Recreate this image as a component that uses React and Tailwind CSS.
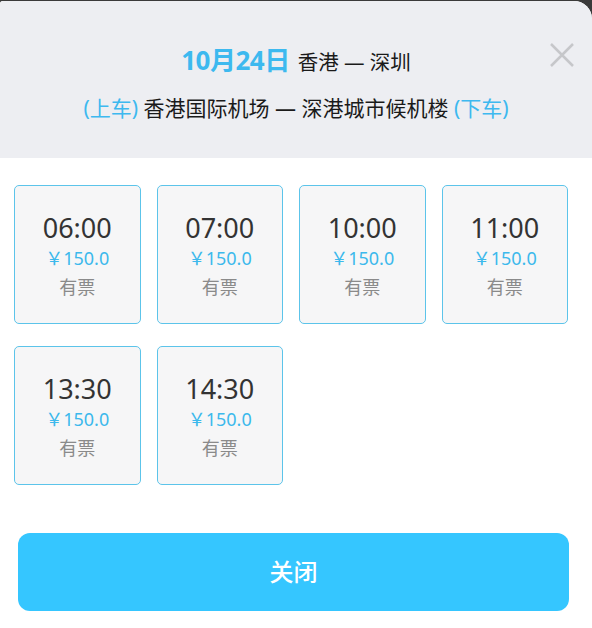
const times = ["06:00", "07:00", "10:00", "11:00", "13:30", "14:30"];

function TimeCard({ time }) {
  return (
    <div className="w-[126.5px] h-[139px] rounded-[5px] border border-[#5cc4ea] bg-[#f6f6f7] flex flex-col items-center pt-[24px]">
      <div className="text-[27px] leading-[36px] text-[#333333]">{time}</div>
      <div className="text-[18px] leading-[28px] text-[#3cb9ec] mt-[-2px]">￥150.0</div>
      <div className="text-[18px] leading-[30px] text-[#8a8a8a]">有票</div>
    </div>
  );
}

export default function App() {
  return (
    <div
      className="w-[592px] h-[628px] bg-[#3a3a3a] pt-px overflow-hidden"
      style={{ fontFamily: '"Noto Sans", "Noto Sans CJK SC", sans-serif' }}
    >
      <div className="h-full bg-white rounded-tr-[18px] rounded-tl-[3px] overflow-hidden">
        <div className="relative h-[157px] bg-[#edeef2] flex flex-col items-center pt-[40px]">
          <div className="flex items-baseline gap-[8px]">
            <span className="text-[26px] font-bold text-[#3db9ef] tracking-[-0.5px]">10月24日</span>
            <span className="text-[20.5px] text-[#1a1a1a]">香港 — 深圳</span>
          </div>
          <div className="mt-[13px] text-[21px] text-[#1a1a1a]">
            <span className="text-[#3db9ef]">(上车)</span> 香港国际机场 — 深港城市候机楼{" "}
            <span className="text-[#3db9ef]">(下车)</span>
          </div>
          <button className="absolute right-[16px] top-[40px] w-[28px] h-[28px] flex items-center justify-center">
            <svg width="26" height="26" viewBox="0 0 26 26" fill="none">
              <path d="M2 2L24 24M24 2L2 24" stroke="#c6c7ca" strokeWidth="2.5" />
            </svg>
          </button>
        </div>
        <div className="flex flex-wrap gap-x-[16px] gap-y-[22px] pl-[14px] pt-[27px]">
          {times.map((t) => (
            <TimeCard key={t} time={t} />
          ))}
        </div>
        <div className="pl-[18px] pr-[23px] pt-[48px]">
          <button className="w-full h-[78px] rounded-[12px] bg-[#35c6ff] text-white text-[24px] font-medium">
            关闭
          </button>
        </div>
      </div>
    </div>
  );
}
